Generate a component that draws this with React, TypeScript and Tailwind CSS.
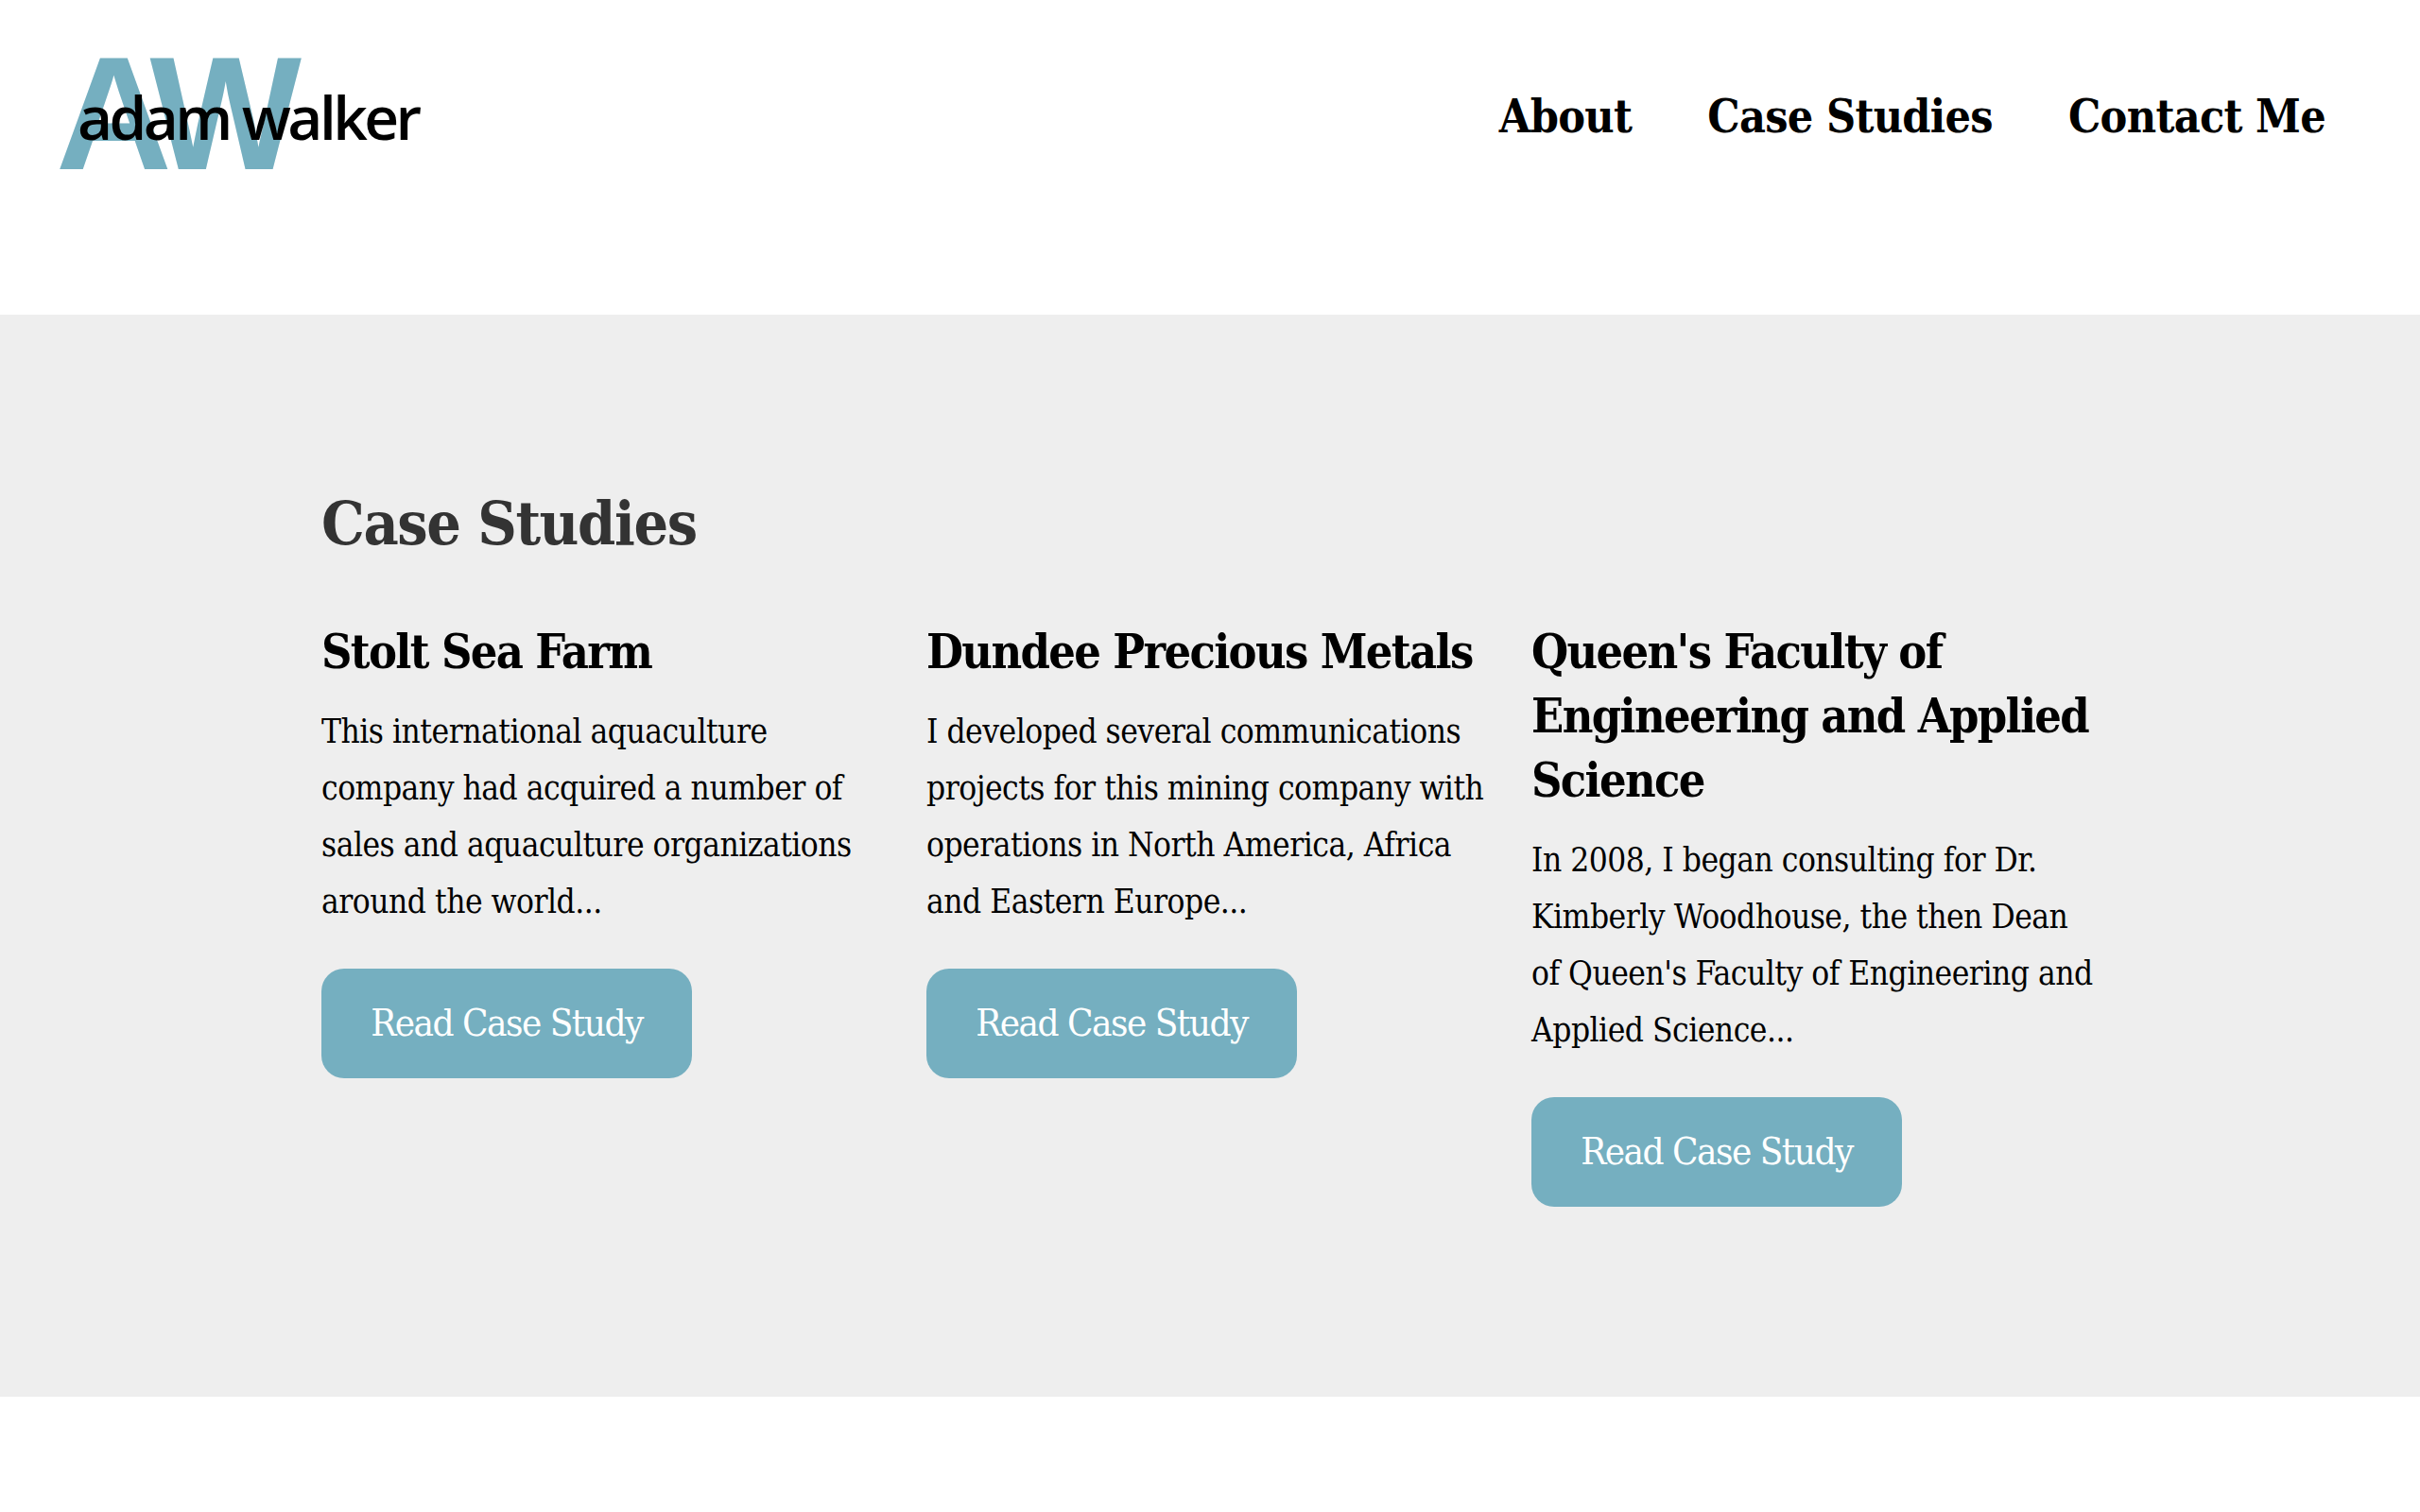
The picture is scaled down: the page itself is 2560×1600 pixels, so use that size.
const serif = 'font-["DejaVu_Serif_Condensed","DejaVu_Serif",serif]';

const studies = [
  {
    title: 'Stolt Sea Farm',
    lines: ['This international aquaculture', 'company had acquired a number of', 'sales and aquaculture organizations', 'around the world...'],
  },
  {
    title: 'Dundee Precious Metals',
    lines: ['I developed several communications', 'projects for this mining company with', 'operations in North America, Africa', 'and Eastern Europe...'],
  },
  {
    title: "Queen's Faculty of Engineering and Applied Science",
    lines: ['In 2008, I began consulting for Dr.', 'Kimberly Woodhouse, the then Dean', "of Queen's Faculty of Engineering and", 'Applied Science...'],
  },
];

function Logo() {
  return (
    <div className="relative w-[400px] h-[130px] ml-[60px] mt-[55px]">
      <span className='absolute left-[-1px] top-[-20px] font-["Liberation_Sans",sans-serif] font-bold text-[170px] leading-[170px] tracking-[-14px] text-[#75afc0]'>AW</span>
      <span className='absolute left-[22px] top-[29px] font-["Open_Sans",sans-serif] font-semibold text-[64px] leading-[80px] tracking-[-3.6px] text-black whitespace-nowrap'>adam walker</span>
    </div>
  );
}

export default function App() {
  return (
    <div className={`min-h-[1600px] bg-white text-black ${serif}`}>
      <header className="h-[333px] flex justify-between items-start">
        <Logo />
        <nav className="flex gap-[80px] pr-[100px] pt-[91px] text-[48px] leading-[64px] font-bold tracking-[-0.7px]">
          <a>About</a>
          <a>Case Studies</a>
          <a>Contact Me</a>
        </nav>
      </header>

      <section className="h-[1145px] bg-[#eeeeee] pl-[340px] pt-[181px]">
        <h1 className="text-[64px] leading-[80px] font-bold text-[#333333] mb-[62px] tracking-[-1.4px]">Case Studies</h1>
        <div className="flex">
          {studies.map((s) => (
            <div key={s.title} className="w-[640px] pr-[40px]">
              <h2 className="text-[50px] leading-[68px] font-bold mb-[20px] tracking-[-1.65px]">{s.title}</h2>
              <p className="text-[35px] leading-[60px] mb-[41px] whitespace-nowrap tracking-[-0.5px]">
                {s.lines.map((line) => (
                  <span key={line} className="block">{line}</span>
                ))}
              </p>
              <button className="w-[392px] h-[116px] pb-[3px] rounded-[24px] bg-[#75afc0] text-white text-[40px] tracking-[-1.5px]">Read Case Study</button>
            </div>
          ))}
        </div>
      </section>
    </div>
  );
}
